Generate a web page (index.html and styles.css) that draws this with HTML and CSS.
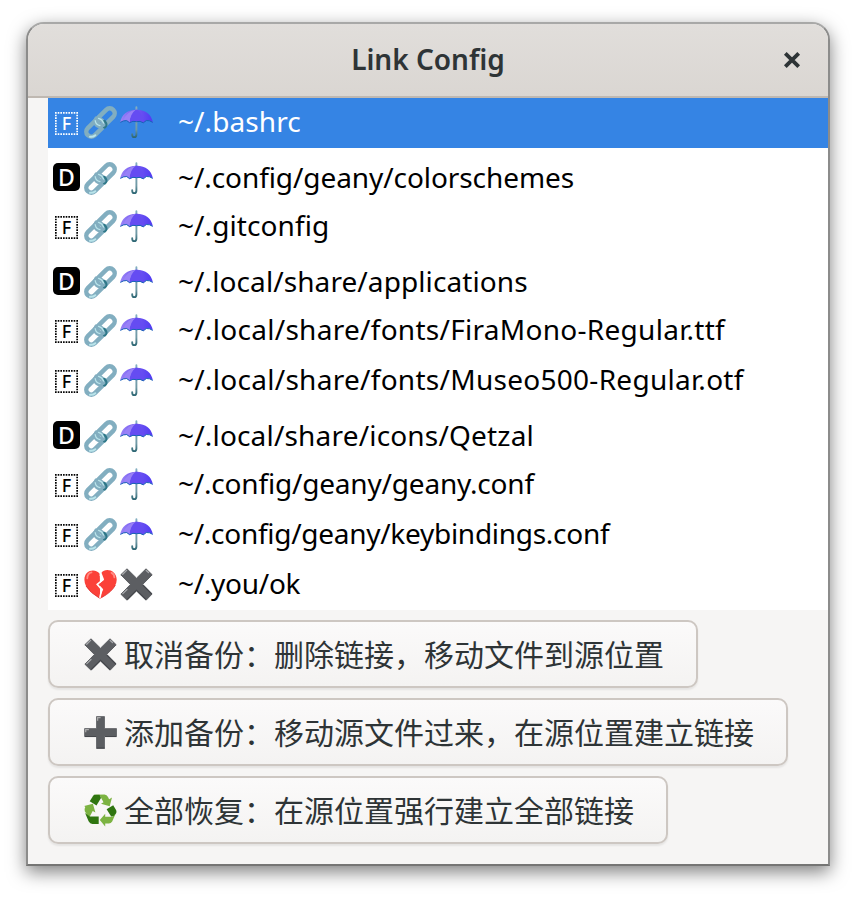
FILE: index.html
```html
<!DOCTYPE html>
<html lang="zh-CN">
<head>
<meta charset="utf-8">
<title>Link Config</title>
<link rel="stylesheet" href="styles.css">
</head>
<body>
<svg class="defs" width="0" height="0">
  <defs>
    <linearGradient id="canopy" x1="0" x2="1" y1="0" y2="0"><stop offset="0" stop-color="#9a83f7"/><stop offset=".45" stop-color="#755bf0"/><stop offset="1" stop-color="#503af3"/></linearGradient>
    <linearGradient id="metal" x1="0" x2="0" y1="0" y2="1"><stop offset="0" stop-color="#82aec0"/><stop offset=".75" stop-color="#7099a5"/><stop offset="1" stop-color="#2f6875"/></linearGradient>
    <symbol id="file" viewBox="0 0 23 23">
      <rect x=".85" y=".85" width="21.3" height="21.3" fill="none" stroke="currentColor" stroke-width="1.7" stroke-dasharray="1.6 1.0625" stroke-dashoffset=".8"/>
      <text x="11.5" y="18" text-anchor="middle" fill="currentColor">F</text>
    </symbol>
    <symbol id="link" viewBox="0 0 33 33">
      <g fill="none" stroke-linecap="round">
        <rect x="-10.2" y="-5" width="20.4" height="10" rx="5" transform="translate(11 22) rotate(-45)" stroke="#82aec0" stroke-width="4.5"/>
        <rect x="-10.2" y="-5" width="20.4" height="10" rx="5" transform="translate(22 11) rotate(-45)" stroke="#82aec0" stroke-width="4.5"/>
        <path d="M20.4 15.6Q23 19 20.6 21" stroke="#2f7889" stroke-width="3.4"/>
        <path d="M12.4 12.4Q10 16 12.6 18.8Q15.3 21.4 19.4 18.8" stroke="#82aec0" stroke-width="4.2"/>
        <path d="M11.2 14.6Q11.8 18.8 16 19.6" stroke="#b9e4ea" stroke-width="1.2"/>
        <path d="M14.6 12.4Q18.2 13.2 19.6 17" stroke="#b9e4ea" stroke-width="1.4"/>
        <path d="M6 30.8Q9 31.2 11.3 29.2" stroke="#b9e4ea" stroke-width="2"/>
      </g>
    </symbol>
    <symbol id="umbrella" viewBox="0 0 33 33">
      <path d="M16.4 1.2v27.2q0 2.7-2.2 2.7-2.2 0-2-3" fill="none" stroke="url(#metal)" stroke-width="1.9" stroke-linecap="round"/>
      <path d="M.2 16.5Q2.2 4.2 16.5 3.7Q30.8 4.2 32.8 16.5L29.6 14.7Q26.3 13 23.3 17Q20.2 14.6 16.5 15.8Q12.8 14.6 9.7 17Q6.5 13.5 3.5 15Z" fill="url(#canopy)"/>
      <path d="M9.6 16.6Q10 8 15.7 3.8L17.3 3.8Q23 8 23.4 16.6Q20 14.4 16.5 15.6Q12.8 14.4 9.6 16.6Z" fill="#654cf2"/>
      <path d="M9.6 16.6Q10 8 15.7 3.8Q6.8 5.3 3.1 14.9Q6.4 13.3 9.6 16.6Z" fill="#9880f7"/>
      <path d="M.3 16.4 3.5 14.9Q6.8 13.3 9.6 16.7Q12.8 14.5 16.5 15.7Q20.2 14.5 23.3 16.8Q26.3 13.2 29.6 14.8L32.7 16.4" fill="none" stroke="#1763b6" stroke-width="1"/>
    </symbol>
    <symbol id="cross" viewBox="0 0 33 33">
      <path d="M7 .8 16.5 10.2 26 .8 32.2 6.8 22.6 16.5 32.1 26 26.1 32.2 16.5 22.8 7 32.2 .9 26.2 10.4 16.5 .8 6.8Z" fill="#5c5e62" stroke="#5c5e62" stroke-width="1" stroke-linejoin="round"/>
      <path d="M7.3 31.5 16.5 22.4 25.9 31.5M22.9 17 31.8 26" fill="none" stroke="#46484d" stroke-width="1.2"/>
      <path d="M2.7 6.2 6.6 2.4M26.2 2.5 28.5 4.5M2.8 25.6 7 21.5" stroke="#a7a9ac" stroke-width="1.3" stroke-linecap="round"/>
    </symbol>
    <symbol id="heart" viewBox="0 0 33 33">
      <path d="M15.8 6.1C12.5.2.4.9.4 11.8.4 20.8 10 26.5 16.2 30.8 22.4 26.5 32.7 20.5 32.7 11.8 32.7 1.4 20.8-.4 17.5 4.7L20.1 11.4 14.5 16.2 19.2 21.2 16.2 28.2Z" fill="#fb4139"/>
      <path d="M16 6.3 18.8 11.8 13.2 16.3 17.7 21.5 15.8 30" fill="none" stroke="#fff" stroke-width="1.6"/>
      <path d="M3.3 10.3Q3.6 5 7.5 4.4M27.5 4.8Q30.3 6 30.4 9.4" fill="none" stroke="#ff8b83" stroke-width="1.8" stroke-linecap="round"/>
      <path d="M2 18Q6 24.8 15.3 30M17.5 29.6Q28 24 31.4 17" fill="none" stroke="#d92c2b" stroke-width=".8"/>
    </symbol>
    <symbol id="plus" viewBox="0 0 33 33">
      <path d="M12.5.6h8v12h12v8h-12v12h-8v-12H.6v-8h11.9Z" fill="#5c5e62" stroke="#5c5e62" stroke-width=".8" stroke-linejoin="round"/>
      <path d="M13 32h7.5M1 20.5h11.5M21 20.5h11.2" stroke="#44464b"/>
      <path d="M13.6 4.7V1.7h3M1.7 16.2v-2.6h3.2" fill="none" stroke="#aaa" stroke-width="1.3"/>
    </symbol>
    <symbol id="recycle" viewBox="0 0 33 33">
      <g fill="#7cb342"><path d="M10 .8 20.5.6Q22.8.8 24 3L25.1 5.2 28 3.5 25.7 12.3 17 9.8 19.5 8.3 15.8 1.4Z"/><path d="M.2 11.9 8.9 9.8 11.4 18.5 8.7 17 5 24.1.8 17.2Q.1 15.2 1.3 13.1Z"/><path d="M31.8 19.3 28.2 27.4Q27 29.4 24.8 29.4H21.2V32.5L15.8 26.1 21.2 19.8V22.7H28.2Z"/></g>
      <g fill="#2f7510"><path d="M10 .8H15.6L17 3.9 12.5 11.4 5.7 7.3 8.9 2.2Z"/><path d="M22.6 15.3 29.2 11.2 32.2 16.3Q32.9 18 32 19.5 30.5 22 27.2 22.5Z"/><path d="M1.1 19 5.8 22.5H14.7V29.9H8.4Q6 29.8 4.6 27.3Z"/></g>
    </symbol>
  </defs>
</svg>
<main class="window">
  <header class="titlebar">
    <span></span>
    <h1>Link Config</h1>
    <button class="close" aria-label="Close"><svg width="18" height="18" viewBox="0 0 18 18"><path d="M2.3 2.3 15.7 15.7M15.7 2.3 2.3 15.7" stroke="#2e3436" stroke-width="3.8"/></svg></button>
  </header>
  <section class="content">
    <ul class="list">
      <li class="row selected"><svg class="file"><use href="#file"/></svg><svg class="emoji"><use href="#link"/></svg><svg class="emoji"><use href="#umbrella"/></svg><span class="path">~/.bashrc</span></li>
      <li class="row folder"><span class="dir">D</span><svg class="emoji"><use href="#link"/></svg><svg class="emoji"><use href="#umbrella"/></svg><span class="path snug">~/.config/geany/colorschemes</span></li>
      <li class="row"><svg class="file"><use href="#file"/></svg><svg class="emoji"><use href="#link"/></svg><svg class="emoji"><use href="#umbrella"/></svg><span class="path">~/.gitconfig</span></li>
      <li class="row folder"><span class="dir">D</span><svg class="emoji"><use href="#link"/></svg><svg class="emoji"><use href="#umbrella"/></svg><span class="path">~/.local/share/applications</span></li>
      <li class="row"><svg class="file"><use href="#file"/></svg><svg class="emoji"><use href="#link"/></svg><svg class="emoji"><use href="#umbrella"/></svg><span class="path loose">~/.local/share/fonts/FiraMono-Regular.ttf</span></li>
      <li class="row"><svg class="file"><use href="#file"/></svg><svg class="emoji"><use href="#link"/></svg><svg class="emoji"><use href="#umbrella"/></svg><span class="path loose">~/.local/share/fonts/Museo500-Regular.otf</span></li>
      <li class="row folder"><span class="dir">D</span><svg class="emoji"><use href="#link"/></svg><svg class="emoji"><use href="#umbrella"/></svg><span class="path wide">~/.local/share/icons/Qetzal</span></li>
      <li class="row"><svg class="file"><use href="#file"/></svg><svg class="emoji"><use href="#link"/></svg><svg class="emoji"><use href="#umbrella"/></svg><span class="path tight">~/.config/geany/geany.conf</span></li>
      <li class="row"><svg class="file"><use href="#file"/></svg><svg class="emoji"><use href="#link"/></svg><svg class="emoji"><use href="#umbrella"/></svg><span class="path tighter">~/.config/geany/keybindings.conf</span></li>
      <li class="row"><svg class="file"><use href="#file"/></svg><svg class="emoji"><use href="#heart"/></svg><svg class="emoji"><use href="#cross"/></svg><span class="path tighter">~/.you/ok</span></li>
    </ul>
    <div class="actions">
      <button class="action"><svg class="emoji"><use href="#cross"/></svg><span>取消备份：删除链接，移动文件到源位置</span></button>
      <button class="action"><svg class="emoji"><use href="#plus"/></svg><span>添加备份：移动源文件过来，在源位置建立链接</span></button>
      <button class="action"><svg class="emoji"><use href="#recycle"/></svg><span>全部恢复：在源位置强行建立全部链接</span></button>
    </div>
  </section>
</main>
</body>
</html>
```
FILE: styles.css
```css
* { box-sizing: border-box; }
body {
  margin: 0;
  padding: 22px 26px 32px;
  height: 898px;
  overflow: hidden;
  background: #fff;
  font-family: "Noto Sans", "Noto Sans CJK SC", sans-serif;
}
.defs { position: absolute; }
.window {
  width: 804px;
  height: 844px;
  border: 2px solid #8c8c8b;
  border-top-color: #a8a8a7;
  border-bottom-color: #757574;
  border-radius: 18px 18px 0 0;
  background: #f6f5f4;
  box-shadow: 0 6px 18px rgba(0, 0, 0, .5);
}
.titlebar {
  height: 74px;
  display: grid;
  grid-template-columns: 72px 1fr 72px;
  align-items: center;
  border-bottom: 2px solid #bfb8b1;
  border-radius: 16px 16px 0 0;
  background: linear-gradient(#e1dedb, #dad6d2);
}
.titlebar h1 {
  margin: 0;
  padding-bottom: 2px;
  text-align: center;
  font-size: 28px;
  line-height: 40px;
  font-weight: 600;
  color: #2e3436;
}
.close {
  justify-self: center;
  display: flex;
  padding: 0;
  border: 0;
  background: none;
}
.content { padding-left: 20px; }
.list {
  margin: 0;
  padding: 0;
  list-style: none;
  background: #fff;
  color: #000;
}
.row {
  height: 50px;
  display: flex;
  align-items: flex-start;
  padding: 8px 0 0 5px;
}
.row.folder { height: 54px; padding-top: 14px; }
.row.selected { background: #3584e4; color: #fff; }
.file {
  flex: none;
  width: 23px;
  height: 23px;
  margin: 6px 6px 0 2px;
  font-size: 18px;
  font-weight: 500;
}
.dir {
  display: flex;
  align-items: center;
  justify-content: center;
  width: 27px;
  height: 28px;
  margin: 1px 4px 0 0;
  padding-bottom: 1px;
  border-radius: 5px;
  background: #000;
  color: #fff;
  font-size: 23px;
  line-height: 20px;
  font-weight: 500;
}
.emoji { flex: none; width: 33px; height: 33px; }
.emoji + .emoji { margin-left: 3px; }
.path {
  margin-left: 25px;
  font-size: 28px;
  line-height: 38px;
  margin-top: -4px;
  letter-spacing: .09px;
  white-space: nowrap;
}
.path.snug { letter-spacing: -.08px; }
.path.tight { letter-spacing: -.19px; }
.path.tighter { letter-spacing: -.28px; }
.path.wide { letter-spacing: .18px; }
.path.loose { letter-spacing: .28px; }
.actions {
  display: flex;
  flex-direction: column;
  align-items: flex-start;
  gap: 10px;
  padding-top: 10px;
}
.action {
  height: 68px;
  display: flex;
  align-items: center;
  gap: 7px;
  padding: 0 32px 0 34px;
  border: 2px solid #cdc7c2;
  border-radius: 10px;
  background: linear-gradient(#fbfafa, #f4f3f2);
  box-shadow: 0 2px 2px rgba(0, 0, 0, .07);
  color: #2e3436;
  font: 30px/44px "Noto Sans CJK SC", sans-serif;
  white-space: nowrap;
}
.action span { padding-bottom: 2px; }
```
